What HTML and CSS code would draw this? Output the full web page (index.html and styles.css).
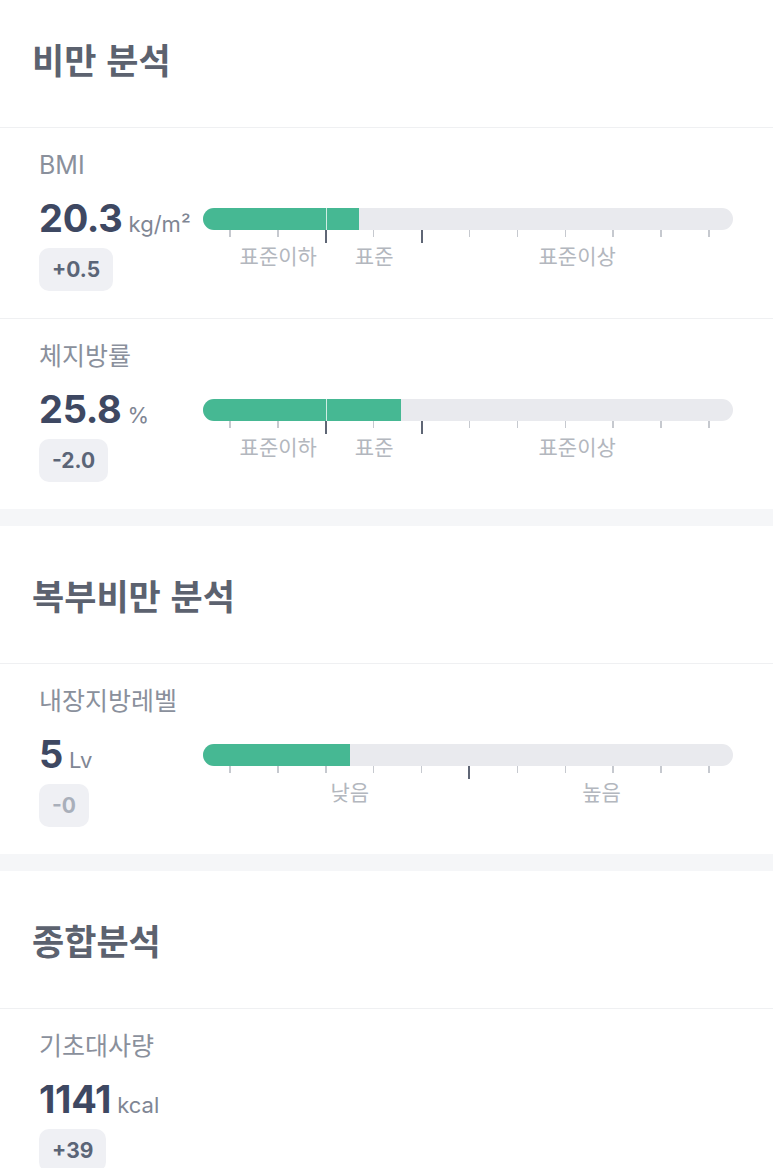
FILE: index.html
```html
<!DOCTYPE html>
<html lang="ko">
<head>
    <meta charset="UTF-8">
    <meta name="viewport" content="width=device-width, initial-scale=1.0">
    <title>체성분 분석</title>
    <link rel="stylesheet" href="styles.css">
</head>
<body>
    <div class="page">
        <section class="section">
            <h2 class="section-title">비만 분석</h2>

            <div class="metric">
                <div class="metric-label">BMI</div>
                <div class="metric-body">
                    <div class="metric-left">
                        <div class="value">20.3<span class="unit">kg/m²</span></div>
                        <span class="badge">+0.5</span>
                    </div>
                    <div class="scale">
                        <div class="bar">
                            <div class="fill" style="width: 29.4%"></div>
                            <div class="marker" style="left: 23.2%"></div>
                        </div>
                        <div class="ticks">
                            <i></i><i></i><i class="major"></i><i></i><i class="major"></i><i></i><i></i><i></i><i></i><i></i><i></i>
                        </div>
                        <div class="scale-labels">
                            <span style="left: 14.2%">표준이하</span>
                            <span style="left: 32.3%">표준</span>
                            <span style="left: 70.6%">표준이상</span>
                        </div>
                    </div>
                </div>
            </div>

            <div class="metric">
                <div class="metric-label">체지방률</div>
                <div class="metric-body">
                    <div class="metric-left">
                        <div class="value">25.8<span class="unit">%</span></div>
                        <span class="badge">-2.0</span>
                    </div>
                    <div class="scale">
                        <div class="bar">
                            <div class="fill" style="width: 37.4%"></div>
                            <div class="marker" style="left: 23.2%"></div>
                        </div>
                        <div class="ticks">
                            <i></i><i></i><i class="major"></i><i></i><i class="major"></i><i></i><i></i><i></i><i></i><i></i><i></i>
                        </div>
                        <div class="scale-labels">
                            <span style="left: 14.2%">표준이하</span>
                            <span style="left: 32.3%">표준</span>
                            <span style="left: 70.6%">표준이상</span>
                        </div>
                    </div>
                </div>
            </div>
        </section>

        <section class="section">
            <h2 class="section-title">복부비만 분석</h2>

            <div class="metric">
                <div class="metric-label">내장지방레벨</div>
                <div class="metric-body">
                    <div class="metric-left">
                        <div class="value">5<span class="unit">Lv</span></div>
                        <span class="badge zero">-0</span>
                    </div>
                    <div class="scale">
                        <div class="bar">
                            <div class="fill" style="width: 27.7%"></div>
                        </div>
                        <div class="ticks">
                            <i></i><i></i><i></i><i></i><i></i><i class="major"></i><i></i><i></i><i></i><i></i><i></i>
                        </div>
                        <div class="scale-labels">
                            <span style="left: 27.7%">낮음</span>
                            <span style="left: 75.2%">높음</span>
                        </div>
                    </div>
                </div>
            </div>
        </section>

        <section class="section">
            <h2 class="section-title">종합분석</h2>

            <div class="metric">
                <div class="metric-label">기초대사량</div>
                <div class="metric-body">
                    <div class="metric-left">
                        <div class="value">1141<span class="unit">kcal</span></div>
                        <span class="badge">+39</span>
                    </div>
                </div>
            </div>
        </section>
    </div>
</body>
</html>
```

FILE: styles.css
```css
body {
    margin: 0;
    background-color: #fff;
    font-family: 'Inter', 'Noto Sans CJK KR', sans-serif;
    color: #3e4862;
}
.page {
    margin-top: -10px;
}
.section + .section {
    border-top: 17px solid #f5f6f8;
}
.section-title {
    margin: 0;
    height: 137px;
    display: flex;
    align-items: center;
    padding-left: 32px;
    font-family: 'Noto Sans CJK KR', sans-serif;
    font-size: 35px;
    font-weight: 700;
    color: #5c626f;
    border-bottom: 1px solid #eff0f2;
}
.metric {
    padding: 22px 40px 27px 39px;
    height: 141px;
}
.metric + .metric {
    border-top: 1px solid #eff0f2;
}
.metric-label {
    font-size: 25px;
    line-height: 30px;
    color: #8a909c;
}
.metric-body {
    display: flex;
}
.metric-left {
    width: 164px;
    flex-shrink: 0;
}
.value {
    margin-top: 16px;
    font-size: 38px;
    line-height: 44px;
    font-weight: 700;
    letter-spacing: -0.3px;
    color: #3e4862;
}
.unit {
    margin-left: 6px;
    font-size: 22px;
    line-height: 1;
    font-weight: 400;
    letter-spacing: 0;
    color: #7f8694;
}
.badge {
    display: block;
    width: fit-content;
    margin-top: 8px;
    padding: 0 13px;
    height: 43px;
    line-height: 43px;
    border-radius: 10px;
    background-color: #eff0f4;
    font-size: 21px;
    font-weight: 700;
    color: #5b6577;
}
.badge.zero {
    color: #a9afba;
}
.scale {
    flex: 1;
    margin-top: 28px;
}
.bar {
    position: relative;
    height: 22px;
    border-radius: 11px;
    background-color: #e9eaee;
    overflow: hidden;
}
.fill {
    height: 100%;
    background-color: #46b893;
}
.marker {
    position: absolute;
    top: 0;
    bottom: 0;
    width: 1.5px;
    background-color: rgba(255, 255, 255, 0.75);
}
.ticks {
    display: flex;
    height: 13px;
    padding-left: 3px;
}
.ticks i {
    flex: 1;
    display: flex;
    justify-content: center;
}
.ticks i::before {
    content: '';
    width: 1.5px;
    height: 7px;
    background-color: #c6c9cf;
}
.ticks i.major::before {
    width: 2px;
    height: 13px;
    background-color: #5f6675;
}
.scale-labels {
    position: relative;
    margin-top: 2px;
    height: 24px;
}
.scale-labels span {
    position: absolute;
    top: 0;
    transform: translateX(-50%);
    font-size: 21px;
    line-height: 24px;
    color: #b3b7be;
    white-space: nowrap;
}
```
